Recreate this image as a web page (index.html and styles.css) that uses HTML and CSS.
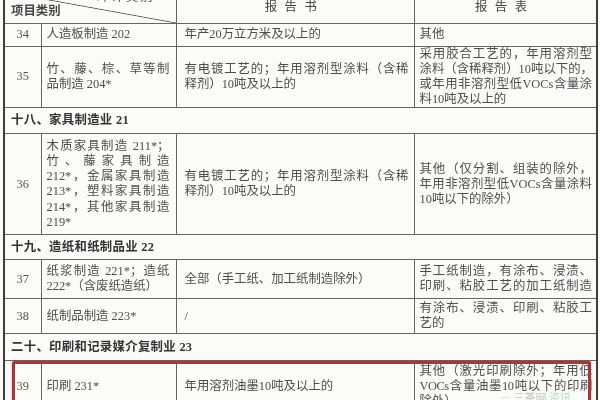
FILE: index.html
```html
<!DOCTYPE html>
<html lang="zh">
<head>
<meta charset="utf-8">
<link rel="stylesheet" href="styles.css">
</head>
<body>
<div class="sheet">
<table class="grid">
  <colgroup>
    <col class="c1"><col class="c2"><col class="c3"><col class="c4">
  </colgroup>
  <tr class="r-head">
    <td colspan="2" class="diag">
      <span class="tag-top">环评类别</span>
      <span class="tag-bottom">项目类别</span>
    </td>
    <td class="head">报告书</td>
    <td class="head">报告表</td>
  </tr>
  <tr class="r34">
    <td class="num">34</td>
    <td class="cat">人造板制造 202</td>
    <td class="book">年产20万立方米及以上的</td>
    <td class="form">其他</td>
  </tr>
  <tr class="r35">
    <td class="num">35</td>
    <td class="cat"><span class="j">竹、藤、棕、草等制</span>品制造 204*</td>
    <td class="book"><span class="j">有电镀工艺的；年用溶剂型涂料（含稀</span>释剂）10吨及以上的</td>
    <td class="form"><span class="j">采用胶合工艺的，年用溶剂型</span><span class="j">涂料（含稀释剂）10吨以下的，</span><span class="j">或年用非溶剂型低VOCs含量涂</span>料10吨及以上的</td>
  </tr>
  <tr class="r-sec">
    <td colspan="4" class="sec">十八、家具制造业 21</td>
  </tr>
  <tr class="r36">
    <td class="num">36</td>
    <td class="cat"><span class="j">木质家具制造 211*；</span><span class="j">竹、藤家具制造</span><span class="j">212*，金属家具制造</span><span class="j">213*，塑料家具制造</span><span class="j">214*，其他家具制造</span>219*</td>
    <td class="book"><span class="j">有电镀工艺的；年用溶剂型涂料（含稀</span>释剂）10吨及以上的</td>
    <td class="form"><span class="j">其他（仅分割、组装的除外，</span><span class="j">年用非溶剂型低VOCs含量涂料</span>10吨以下的除外）</td>
  </tr>
  <tr class="r-sec19">
    <td colspan="4" class="sec">十九、造纸和纸制品业 22</td>
  </tr>
  <tr class="r37">
    <td class="num">37</td>
    <td class="cat"><span class="j">纸浆制造 221*；造纸</span>222*（含废纸造纸）</td>
    <td class="book">全部（手工纸、加工纸制造除外）</td>
    <td class="form"><span class="j">手工纸制造，有涂布、浸渍、</span><span class="j">印刷、粘胶工艺的加工纸制造</span></td>
  </tr>
  <tr class="r38">
    <td class="num">38</td>
    <td class="cat">纸制品制造 223*</td>
    <td class="book">/</td>
    <td class="form"><span class="j">有涂布、浸渍、印刷、粘胶工</span>艺的</td>
  </tr>
  <tr class="r-sec20">
    <td colspan="4" class="sec">二十、印刷和记录媒介复制业 23</td>
  </tr>
  <tr class="r39">
    <td class="num">39</td>
    <td class="cat">印刷 231*</td>
    <td class="book">年用溶剂油墨10吨及以上的</td>
    <td class="form"><span class="j">其他（激光印刷除外；年用低</span><span class="j tight">VOCs含量油墨10吨以下的印刷</span>除外）</td>
  </tr>
</table>
</div>
<div class="mark"></div>
<div class="wm"><span class="wm-g">— 三茶网</span> <span class="wm-c">资讯</span></div>
</body>
</html>
```

FILE: styles.css
```css
html, body {
  margin: 0;
  padding: 0;
  height: 400px;
  overflow: hidden;
  background: #fbfbfa;
}
body {
  position: relative;
}
.sheet {
  margin-top: -10px;
  padding-left: 3px;
}
.grid {
  border-collapse: collapse;
  table-layout: fixed;
  width: 593px;
  font: 12.4px/15.2px "Liberation Serif", "Noto Sans CJK SC", serif;
  color: #4d4d4d;
  border: 2px solid #3f3f3f;
  filter: blur(0.35px);
}
.c1 { width: 37px; }
.c2 { width: 135px; }
.c3 { width: 238px; }
.c4 { width: 183px; }
.grid td {
  border: 1px solid #666;
  padding: 0 6px 0 5px;
  vertical-align: middle;
  overflow: hidden;
  white-space: nowrap;
}
.r-head { height: 32px; }
.r34 { height: 23px; }
.r35 { height: 57px; }
.r-sec { height: 26px; }
.r36 { height: 101px; }
.r-sec19 { height: 25px; }
.r37 { height: 39px; }
.r38 { height: 35px; }
.r-sec20 { height: 27px; }
.r39 { height: 52px; }
.grid td.diag {
  position: relative;
  background: linear-gradient(to top right, transparent calc(50% - 0.8px), #555 50%, transparent calc(50% + 0.8px));
}
.tag-top {
  position: absolute;
  top: -2px;
  left: 92px;
  letter-spacing: 2px;
  color: #555;
}
.tag-bottom {
  position: absolute;
  left: 6px;
  bottom: 3px;
  color: #444;
  font-weight: bold;
}
.grid td.head {
  text-align: center;
  letter-spacing: 0.6em;
  color: #444;
}
.grid td.num {
  text-align: center;
  padding: 0;
  color: #555;
}
.grid td.cat { padding: 0 6px 0 5px; }
.grid td.book { padding: 0 5px 0 8px; }
.grid td.form { padding: 0 4px 0 5px; }
.j {
  display: block;
  text-align: justify;
  text-align-last: justify;
}
.tight { letter-spacing: -0.45px; }
.grid td.sec {
  padding-left: 6px;
  font-weight: bold;
  color: #333;
  letter-spacing: 0.3px;
}
.mark {
  position: absolute;
  left: 12px;
  top: 361px;
  width: 573px;
  height: 60px;
  border: 3px solid #a83838;
  border-radius: 2px;
  box-shadow: 0 0 2px rgba(170, 60, 60, 0.5);
}
.wm {
  position: absolute;
  left: 500px;
  top: 391px;
  font: 11px/12px "Noto Sans CJK SC", sans-serif;
  opacity: 0.45;
}
.wm-g { color: #777; }
.wm-c { color: #6fb38a; }
```
